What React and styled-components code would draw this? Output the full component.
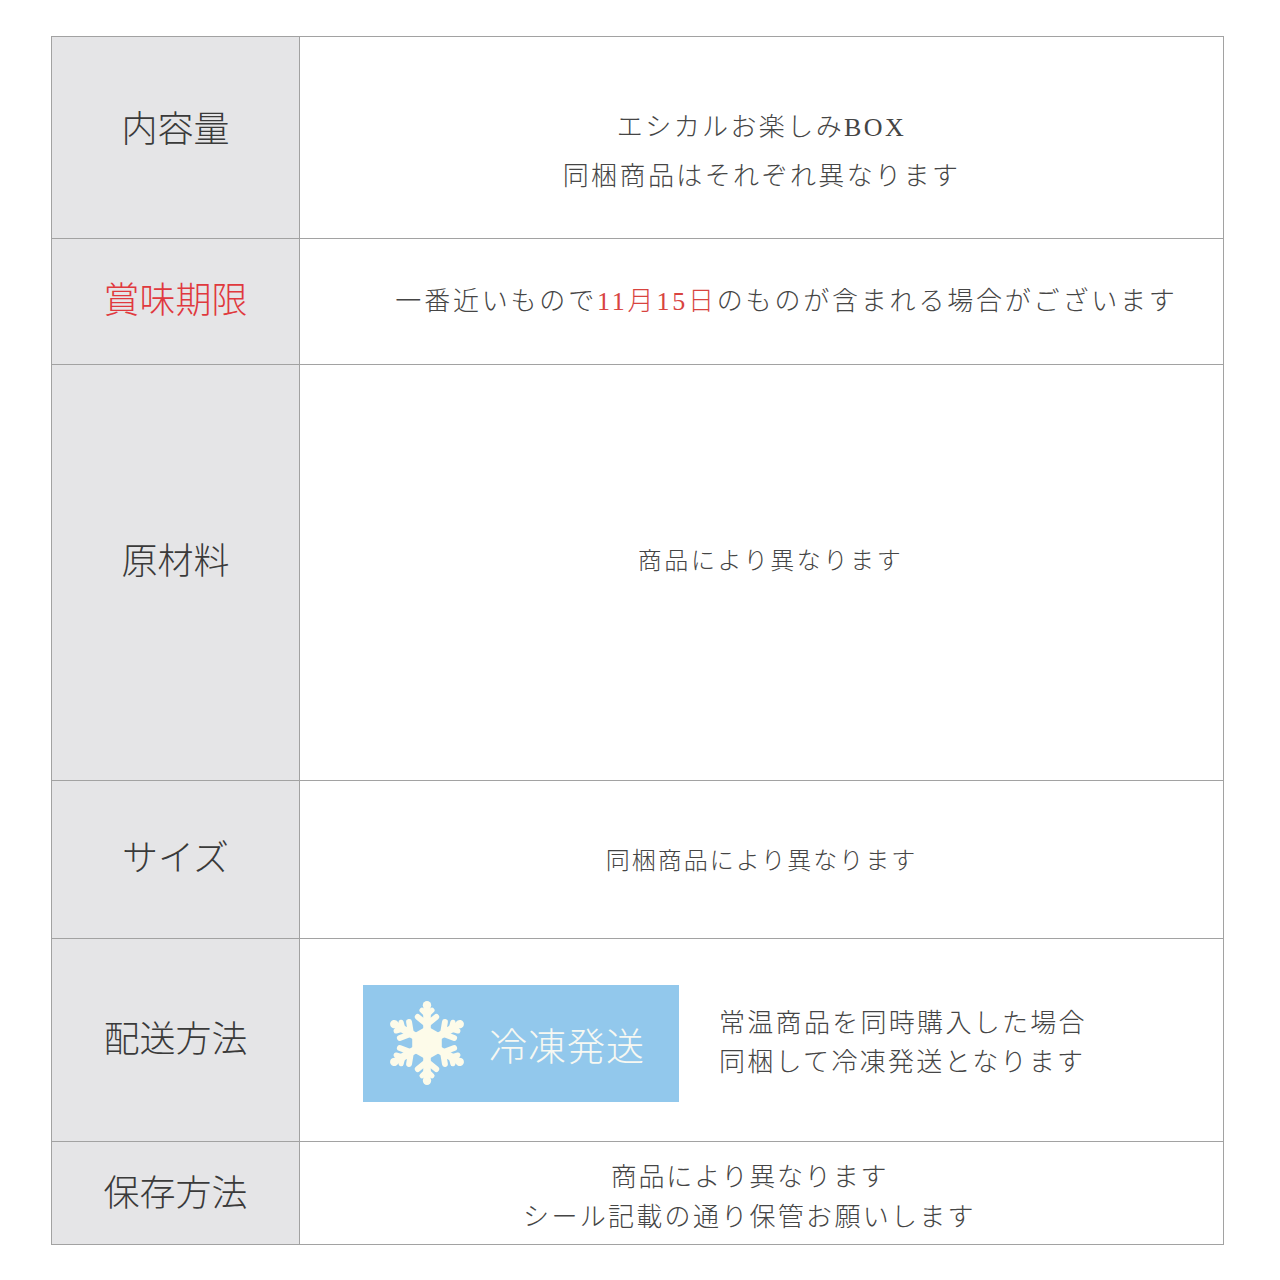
import styled, { createGlobalStyle } from "styled-components";

//
//  Product spec sheet: label column on the left, details on the right.
//

const GlobalStyle = createGlobalStyle`
body {
    margin: 0;
    background: #fff;
    font-family: "Liberation Serif", "Noto Sans CJK JP", serif;
}
`

const Snowflake = () => {
    const arms = [0, 60, 120, 180, 240, 300];
    return (
        <svg width="84" height="94" viewBox="-50 -54 100 108">
            <g fill="#fdfbe9" stroke="#fdfbe9" strokeLinecap="round" strokeLinejoin="round">
                <polygon points="0,-18 15.6,-9 15.6,9 0,18 -15.6,9 -15.6,-9" strokeWidth="4" />
                {arms.map((a) => (
                    <g key={a} transform={`rotate(${a})`}>
                        <path d="M0 0 L0 -40" strokeWidth="9" fill="none" />
                        <path d="M0 -22 L-11 -31 M0 -22 L11 -31" strokeWidth="7" fill="none" />
                        <path d="M0 -33 L-6 -39 M0 -33 L6 -39" strokeWidth="6" fill="none" />
                        <circle cx="0" cy="-45" r="5" stroke="none" />
                    </g>
                ))}
            </g>
        </svg>
    );
};

const App = () => {
    return (
        <>
            <GlobalStyle />
            <Page>
                <Table>
                    <Row $h={201}>
                        <Label $pb={24}>内容量</Label>
                        <Cell $pt={28}>
                            <Line $lh={49}>エシカルお楽しみBOX</Line>
                            <Line $lh={49}>同梱商品はそれぞれ異なります</Line>
                        </Cell>
                    </Row>
                    <Row $h={126}>
                        <Label $red $pb={10}>賞味期限</Label>
                        <Cell $pl={50}>
                            <Line $ls={2.8}>一番近いもので<Red>11月15日</Red>のものが含まれる場合がございます</Line>
                        </Cell>
                    </Row>
                    <Row $h={416}>
                        <Label $pb={30}>原材料</Label>
                        <Cell $pb={24} $pl={18}>
                            <Line $size={24} $ls={2.6}>商品により異なります</Line>
                        </Cell>
                    </Row>
                    <Row $h={158}>
                        <Label $pb={10}>サイズ</Label>
                        <Cell $pt={2}>
                            <Line $size={24} $ls={2}>同梱商品により異なります</Line>
                        </Cell>
                    </Row>
                    <Row $h={203}>
                        <Label $pb={8}>配送方法</Label>
                        <ShipCell>
                            <Badge>
                                <Snowflake />
                                <BadgeText>冷凍発送</BadgeText>
                            </Badge>
                            <div>
                                <Line $lh={39} $ls={2.3}>常温商品を同時購入した場合</Line>
                                <Line $lh={39} $ls={2.3}>同梱して冷凍発送となります</Line>
                            </div>
                        </ShipCell>
                    </Row>
                    <Row $h={103}>
                        <Label $pb={6}>保存方法</Label>
                        <Cell $pt={10} $pr={24}>
                            <Line $lh={40} $ls={1.8}>商品により異なります</Line>
                            <Line $lh={40} $ls={2.3}>シール記載の通り保管お願いします</Line>
                        </Cell>
                    </Row>
                </Table>
            </Page>
        </>
    )
}

const Page = styled.div`
padding: 36px 0 36px 51px;
`

const Table = styled.div`
width: 1171px;
border: 1px solid #a2a2a2;
display: flex;
flex-direction: column;
`

const Row = styled.div`
display: grid;
grid-template-columns: 248px 1fr;
height: ${p => p.$h}px;
box-sizing: border-box;

& + & {
    border-top: 1px solid #a2a2a2;
}
`

const Label = styled.div`
display: flex;
align-items: center;
justify-content: center;
background-color: #e5e5e7;
border-right: 1px solid #a2a2a2;
font-size: 36px;
font-weight: 300;
color: ${p => p.$red ? '#e0393e' : '#3a3a3a'};
padding-bottom: ${p => p.$pb || 0}px;
`

const Cell = styled.div`
display: flex;
flex-direction: column;
align-items: center;
justify-content: center;
padding: ${p => p.$pt || 0}px ${p => p.$pr || 0}px ${p => p.$pb || 0}px ${p => p.$pl || 0}px;
`

const Line = styled.p`
margin: 0;
font-size: ${p => p.$size || 26}px;
line-height: ${p => p.$lh || 40}px;
letter-spacing: ${p => p.$ls ?? 2.4}px;
font-weight: 300;
color: #454545;
white-space: nowrap;
`

const Red = styled.span`
color: #d8443f;
`

const ShipCell = styled.div`
display: flex;
align-items: center;
gap: 40px;
padding-left: 63px;
padding-top: 6px;
`

const Badge = styled.div`
display: flex;
align-items: center;
gap: 20px;
width: 316px;
height: 117px;
box-sizing: border-box;
padding-left: 22px;
background-color: #92c8ec;
`

const BadgeText = styled.span`
font-family: "Noto Sans CJK JP", sans-serif;
font-size: 38px;
font-weight: 300;
color: #f7f8f2;
letter-spacing: 1px;
`

export default App;
